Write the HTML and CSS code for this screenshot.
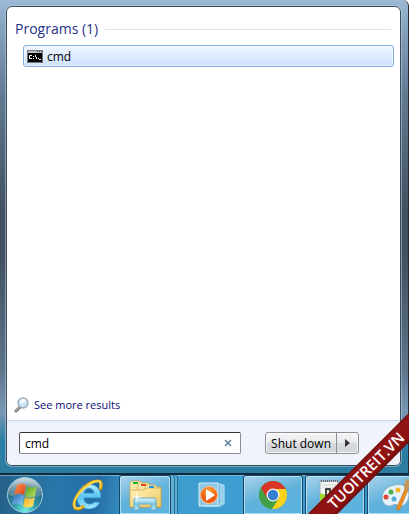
FILE: index.html
```html
<!DOCTYPE html>
<html lang="en">
<head>
  <meta charset="UTF-8">
  <title>Start menu</title>
  <meta name="viewport" content="width=device-width, initial-scale=1.0">
  <link rel="stylesheet" href="styles.css">
</head>
<body>
  <div class="desktop">
    <div class="start-menu">
      <div class="panel">
        <main class="results">
          <h1 class="group">Programs (1)</h1>
          <button class="result">
            <svg width="16" height="13" viewBox="0 0 16 13" aria-hidden="true">
              <rect width="16" height="13" fill="#777"/>
              <rect x="1" y="1" width="14" height="2" fill="#b9bec4"/>
              <path d="M10 1h1v1h-1zM12 1h1v1h-1zM14 1h1v1h-1z" fill="#555"/>
              <rect x="1" y="3" width="14" height="9" fill="#000"/>
              <path d="M5 5.5H2.500v3H5M6 6.500h1M6 8.500h1M8.500 5v2M9.500 7v2M11 8.500h1M12 9.500h2" stroke="#fff" fill="none"/>
            </svg>
            <span>cmd</span>
          </button>
          <a class="more" href="#">
            <svg width="16" height="16" viewBox="0 0 16 16" aria-hidden="true">
              <path d="M2 14l4-4" stroke="#6f7479" stroke-width="3" stroke-linecap="round"/>
              <path d="M2 14l4-5" stroke="#c3c7cb" stroke-linecap="round"/>
              <circle cx="9" cy="6" r="5" fill="#c8e6f8" stroke="#9aa7b3" stroke-width="1.3"/>
              <path d="M6 6a3 3 0 0 1 6-2C10 6 8 6 6 6z" fill="#f3fbff"/>
            </svg>
            <span>See more results</span>
          </a>
        </main>
        <footer class="footer">
          <div class="search">
            <input type="text" id="search" aria-label="Search programs and files" value="cmd">
            <button class="clear" aria-label="Clear">
              <svg width="8" height="8" viewBox="0 0 8 8"><path d="M1 1l6 6M7 1L1 7" stroke="#58819f" stroke-width="1.5"/></svg>
            </button>
          </div>
          <div class="power">
            <button class="shutdown">Shut down</button>
            <button class="arrow" aria-label="Power options">
              <svg width="5" height="8" viewBox="0 0 5 8"><path d="M0 0l5 4-5 4z" fill="#333"/></svg>
            </button>
          </div>
        </footer>
      </div>
    </div>
    <nav class="taskbar">
      <button class="orb" aria-label="Start">
        <svg width="38" height="38" viewBox="0 0 38 38">
          <defs>
            <radialGradient id="orb" cx=".5" cy=".95" r=".9">
              <stop offset="0" stop-color="#6ff0e0"/>
              <stop offset=".4" stop-color="#2e93a8"/>
              <stop offset=".8" stop-color="#29607e"/>
              <stop offset="1" stop-color="#6d9fb0"/>
            </radialGradient>
            <linearGradient id="gloss" x2="0" y2="1">
              <stop offset="0" stop-color="#fff" stop-opacity=".6"/>
              <stop offset="1" stop-color="#fff" stop-opacity=".1"/>
            </linearGradient>
            <linearGradient id="red" x2="1" y2="1"><stop stop-color="#ff9a52"/><stop offset="1" stop-color="#d93a12"/></linearGradient>
            <linearGradient id="green" x2="1" y2="1"><stop stop-color="#4f9e1e"/><stop offset="1" stop-color="#c0e56a"/></linearGradient>
            <linearGradient id="blue" x2="1" y2="1"><stop stop-color="#2d66b5"/><stop offset="1" stop-color="#8fd1f5"/></linearGradient>
            <linearGradient id="yellow" x2="1" y2="1"><stop stop-color="#f0a81c"/><stop offset="1" stop-color="#fff07a"/></linearGradient>
          </defs>
          <circle cx="19" cy="19" r="17.5" fill="url(#orb)" stroke="#a5cfdc"/>
          <path d="M2 19a17 17 0 0 1 34 0c-10 4-24 4-34 0z" fill="url(#gloss)"/>
          <path d="M11 9c3-2 6-2 9 0l-2 10c-3-2-6-2-10 0z" fill="url(#red)"/>
          <path d="M21 10c3 2 6 2 10 0l-2 10c-4 2-7 2-10 0z" fill="url(#green)"/>
          <path d="M8 20c3-2 6-2 10 0l-2 9c-3-2-6-2-10 0z" fill="url(#blue)"/>
          <path d="M19 21c3 2 6 2 10 0l-2 9c-4 2-7 2-10 0z" fill="url(#yellow)"/>
        </svg>
      </button>
      <button class="pin ie" aria-label="Internet Explorer">
        <svg width="32" height="32" viewBox="0 0 32 32">
          <defs>
            <linearGradient id="ie" x2="0" y2="1"><stop stop-color="#b5ecff"/><stop offset=".5" stop-color="#58c4f2"/><stop offset="1" stop-color="#a3e8ff"/></linearGradient>
          </defs>
          <path d="M29 19H12c0 7 8 7 10 4h6c-4 11-24 9-23-5C6 1 30 1 29 19zM12 14h10c-1-6-9-6-10 0z" fill="url(#ie)" stroke="#2389c6" stroke-width=".8"/>
          <path d="M28 11c2-5 2-9-2-9C18 1 3 14 2 25c0 7 5 6 10 2" fill="none" stroke="#d99a10" stroke-width="3"/>
          <path d="M28 9c1-4 1-7-2-7C18 2 3 15 2 25c0 5 4 5 8 3" fill="none" stroke="#ffd84a" stroke-width="1.8"/>
        </svg>
      </button>
      <button class="task stack" aria-label="Windows Explorer">
        <svg width="34" height="32" viewBox="0 0 34 32">
          <defs>
            <linearGradient id="folder" x2="1" y2="1"><stop stop-color="#fff3b8"/><stop offset="1" stop-color="#edc75e"/></linearGradient>
            <linearGradient id="stand" x2="0" y2="1"><stop stop-color="#e8faff"/><stop offset=".5" stop-color="#75c4e2"/><stop offset="1" stop-color="#b9e9f8"/></linearGradient>
          </defs>
          <g stroke="#c7a24a" stroke-width=".7" fill="url(#folder)">
            <path d="M2 4l2-2h8l2 2h4v24H2z"/>
            <path d="M10 6l2-2h8l2 2h4v21H10z"/>
            <path d="M17 8l2-2h8l2 2h4v20H17z"/>
            <path d="M2 11h14l3-2h14v19H2z"/>
          </g>
          <rect x="5" y="3" width="5" height="2" fill="#18b43a"/>
          <rect x="13" y="5" width="5" height="2" fill="#d9421f"/>
          <rect x="21" y="7" width="5" height="2" fill="#2491dd"/>
          <path d="M6 31V21q0-2 2-2h18q2 0 2 2v10h-5v-6H11v6z" fill="url(#stand)" stroke="#69a9c6"/>
          <path d="M9 12l.7 5.300L15 18l-5.300.700L9 24l-.700-5.300L3 18l5.300-.700z" fill="#fff"/>
        </svg>
      </button>
      <button class="pin media" aria-label="Windows Media Player">
        <svg width="30" height="28" viewBox="0 0 30 28">
          <defs>
            <radialGradient id="play" cy=".3"><stop stop-color="#ffa640"/><stop offset="1" stop-color="#ef5a0c"/></radialGradient>
          </defs>
          <path d="M7 3l19 1v19l-19 2z" fill="#85c8ea" stroke="#c3e5f5"/>
          <path d="M4 3l19 0v22H4z" fill="#76b8dd" stroke="#c3e5f5"/>
          <path d="M1 2h19v23H1z" fill="#8fc9e8" stroke="#d3edf8"/>
          <circle cx="11" cy="14" r="8.5" fill="url(#play)" stroke="#ffc28d"/>
          <path d="M8 8l9 6-9 6z" fill="#fff"/>
        </svg>
      </button>
      <button class="task wide" aria-label="Google Chrome">
        <svg width="30" height="30" viewBox="0 0 30 30">
          <circle cx="15" cy="15" r="14" fill="#43a047"/>
          <path d="M2.9 8A14 14 0 0 1 27.1 8L28 9H15L9 19z" fill="#dc3427"/>
          <path d="M15 9h12.6A14 14 0 0 1 14 29l7-11z" fill="#fdd21c"/>
          <path d="M3 8l6 10 6 3-1 8A14 14 0 0 1 3 8z" fill="#43a047"/>
          <circle cx="15" cy="15" r="6.5" fill="#f3f5f7"/>
          <circle cx="15" cy="15" r="5.2" fill="#357fce"/>
        </svg>
      </button>
      <button class="task wide note" aria-label="Notepad">
        <svg width="30" height="32" viewBox="0 0 30 32">
          <path d="M6 2h18v29H6z" fill="#f4f7f4" stroke="#9ab"/>
          <path d="M7 2h17" stroke="#667" stroke-width="2" stroke-dasharray="1 1"/>
          <path d="M8 6h14M8 9h14M8 16h14M8 20h14M8 24h14" stroke="#c9d4cf"/>
          <path d="M6 14l6 2v12H6z" fill="#98dc32"/>
          <path d="M12 10h4v14h-4z" fill="#e8f0e0" stroke="#111" stroke-width="1.5"/>
        </svg>
      </button>
      <button class="task wide" aria-label="Paint">
        <svg width="34" height="34" viewBox="0 0 34 34">
          <path d="M2 20C2 10 13 5 22 7c9 2 9 15 2 20-5 3-6-2-11 0-5 3-11-1-11-7z" fill="#e6f2fa" stroke="#87afc8"/>
          <circle cx="6" cy="19" r="2.5" fill="#dd4638"/>
          <circle cx="11" cy="14" r="2.5" fill="#4bb04c"/>
          <circle cx="18" cy="12" r="2.5" fill="#f5b322"/>
          <circle cx="14" cy="21" r="2.5" fill="#54aeda"/>
          <path d="M25 11l3 1-8 19c-2 2-4 1-3-2z" fill="#f08c24" stroke="#b9651c" stroke-width=".5"/>
          <path d="M24 11c0-4 1-8 3-10l3 2-2 9z" fill="#c8955a"/>
        </svg>
      </button>
    </nav>
    <div class="ribbon">TUOITREIT.VN</div>
  </div>
</body>
</html>
```
FILE: styles.css
```css
* { box-sizing: border-box; }
body { margin: 0; font-family: "Open Sans", "Noto Sans", sans-serif; font-size: 12px; color: #000; }
button { font: inherit; color: inherit; padding: 0; border: none; background: none; }
svg { display: block; flex: none; }

.desktop {
  position: relative; overflow: hidden;
  min-height: 100vh; display: flex; flex-direction: column;
}

/* glass frame round the menu */
.start-menu {
  flex: 1; display: flex; padding: 6px 7px 7px 6px;
  border-right: 1px solid #26323f;
  border-top-right-radius: 6px;
  background: linear-gradient(#9db9d5 0%, #88a5c0 5%, #627a92 20%, #435260 44%, #435260 55%, #5d748b 78%, #7896b3 87%, #2b7fa5 93%, #2b7ca0 100%);
}
.panel {
  flex: 1; display: flex; flex-direction: column;
  border: 1px solid #3c4b5a; border-radius: 6px; overflow: hidden;
  box-shadow: 0 0 0 1px rgba(190, 215, 235, 0.5);
  background: #fff;
}
.results { flex: 1; display: flex; flex-direction: column; padding: 12px 6px 6px 7px; }
.group {
  display: flex; align-items: center; gap: 7px;
  margin: 0 3px 6px 1px;
  font-size: 14px; font-weight: normal; line-height: 20px; color: #1e3287;
}
.group::after { content: ""; flex: 1; height: 1px; background: #e0e2e5; }
.result {
  display: flex; align-items: center; gap: 4px;
  height: 22px; margin-left: 9px; padding: 0 3px;
  border: 1px solid #84acdd; border-radius: 3px;
  background: linear-gradient(#f0f6ff, #cde2fd);
  box-shadow: inset 0 0 0 1px rgba(255, 255, 255, 0.5);
}
.more {
  display: flex; align-items: center; gap: 4px;
  margin-top: auto; font-size: 11px; line-height: 18px;
  color: #0a0a78; text-decoration: none;
}

.footer {
  display: flex; align-items: center; gap: 24px;
  height: 45px; padding: 0 41px 0 12px;
  border-top: 1px solid #ccdcec;
  background: linear-gradient(#e6edf8, #f0f3fb 5px);
}
.search {
  flex: 1; min-width: 0; height: 22px; display: flex; align-items: center;
  border: 1px solid #8b9097; border-top-color: #333; border-left-color: #555; border-radius: 2px;
  background: #fff;
}
.search input {
  flex: 1; min-width: 0; height: 20px; padding: 0 5px;
  border: none; outline: none; background: none; font: inherit;
}
.clear { padding: 6px 8px; }
.power {
  display: flex; height: 22px;
  border: 1px solid #8b8f96; border-radius: 3px;
  background: linear-gradient(#f5f5f6 0%, #e9eaec 48%, #d8dade 50%, #d4d6da 100%);
  box-shadow: inset 0 0 0 1px rgba(255, 255, 255, 0.7);
}
.shutdown { padding: 0 5px; }
.arrow { display: flex; align-items: center; padding: 0 8px; border-left: 1px solid #8b8f96; }

.taskbar {
  display: flex; align-items: center; height: 41px;
  border-top: 2px solid #10293b;
  box-shadow: inset 0 1px 0 rgba(150, 205, 235, 0.6);
  background: linear-gradient(100deg, #256087 0%, #2877ab 14%, #256ca5 24%, #3d9bcc 33%, #3e9fd3 60%, #3990c4 100%);
}
.taskbar button { flex: none; display: flex; align-items: center; justify-content: center; height: 100%; }
.orb { width: 50px; }
.pin { width: 69px; }
.taskbar .ie { padding-left: 6px; }
.media { width: 65px; padding-left: 4px; }
.task {
  border: 1px solid #174768; border-bottom: none; border-radius: 3px 3px 0 0;
  box-shadow: inset 0 0 0 1px rgba(205, 235, 250, 0.7);
  background: linear-gradient(160deg, #a9d3ea, #61b2db 50%, #58b2df);
}
.stack {
  width: 52px; margin-right: 7px;
  box-shadow: inset 0 0 0 1px rgba(205, 235, 250, 0.7), 3px 0 0 #62afd4, 4px 0 0 #226b96, 6px 0 0 #62afd4, 7px 0 0 #226b96;
}
.wide { width: 60px; margin-right: 2px; }
.note { padding-right: 12px; }

/* corner banner lying over the menu and the taskbar */
.ribbon {
  position: absolute; right: -57px; bottom: 33px;
  width: 200px; height: 21px;
  transform: rotate(-45deg);
  background: linear-gradient(#7a1010, #941414 20%, #8c1212 80%, #6d0c0c);
  color: #fff; font-size: 15px; font-weight: 600; line-height: 21px; text-align: center;
}
```
